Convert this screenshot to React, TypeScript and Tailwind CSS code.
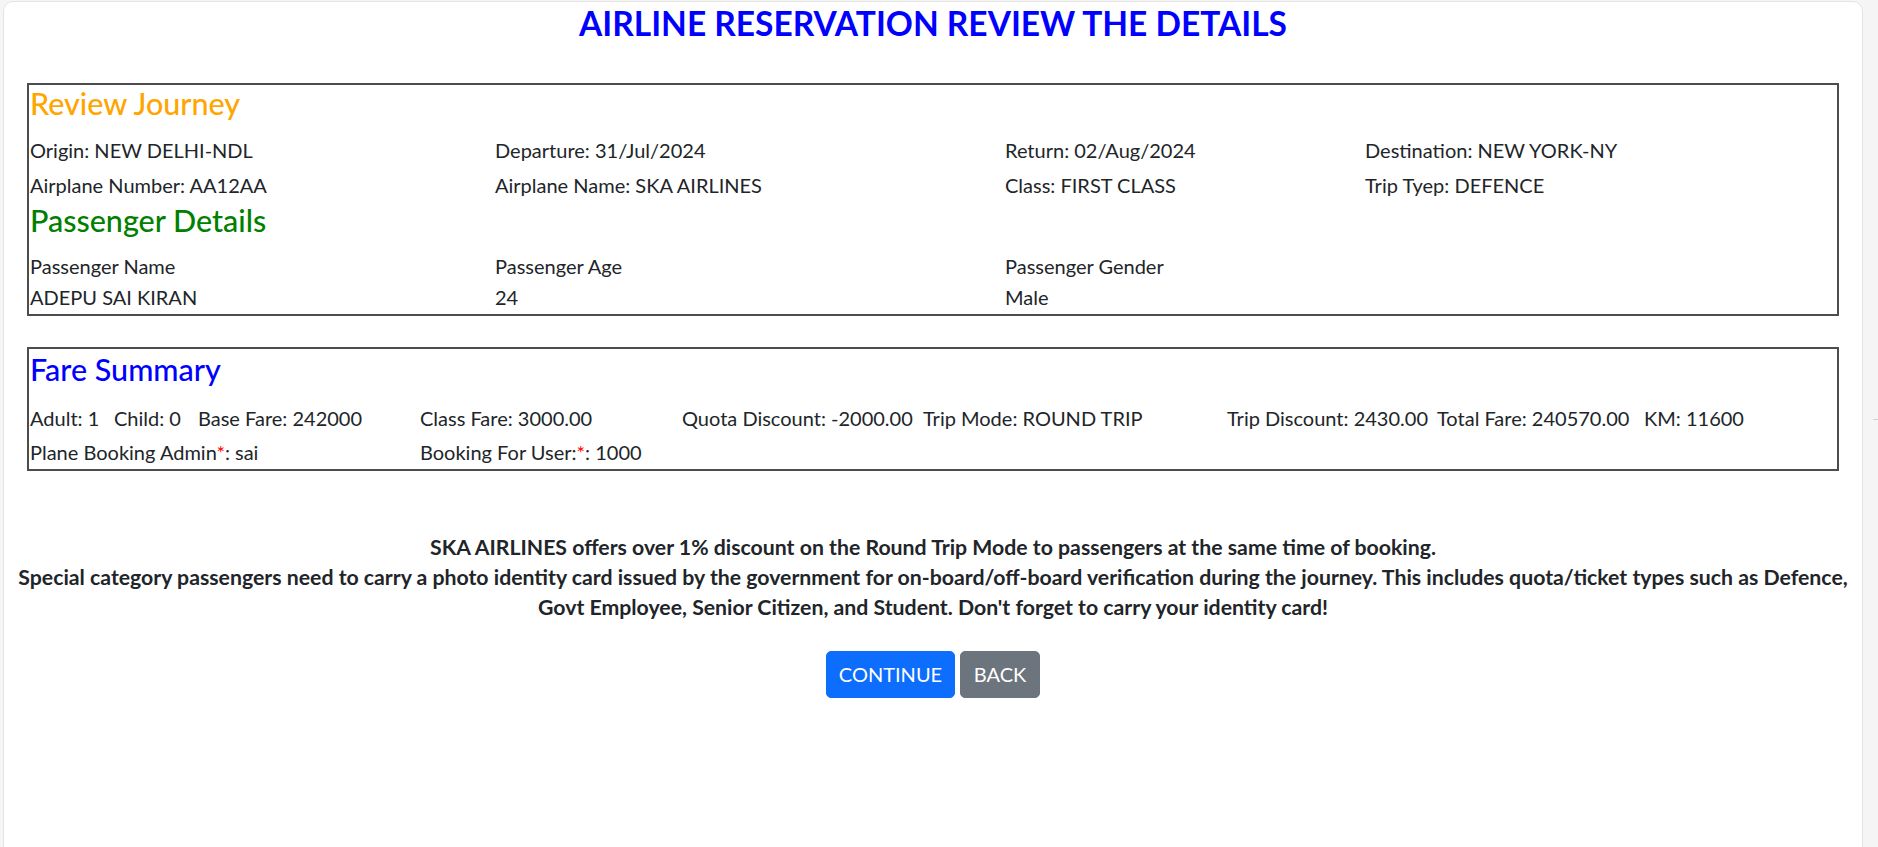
import React from "react";

const journey = [
  ["Origin: NEW DELHI-NDL", "Departure: 31/Jul/2024", "Return: 02/Aug/2024", "Destination: NEW YORK-NY"],
  ["Airplane Number: AA12AA", "Airplane Name: SKA AIRLINES", "Class: FIRST CLASS", "Trip Tyep: DEFENCE"],
];

const fares = [
  "Adult: 1",
  "Child: 0",
  "Base Fare: 242000",
  "Class Fare: 3000.00",
  "Quota Discount: -2000.00",
  "Trip Mode: ROUND TRIP",
  "Trip Discount: 2430.00",
  "Total Fare: 240570.00",
  "KM: 11600",
];

export default function App() {
  return (
    <div
      className="flex h-[847px] overflow-hidden bg-[#f5f5f5] text-[20px] text-[#212529]"
      style={{ fontFamily: "Lato, 'Open Sans', sans-serif" }}
    >
      <div className="w-[3px] shrink-0" />

      {/* main card */}
      <div className="mt-[1px] h-[870px] w-[1860px] shrink-0 rounded-t-[10px] border border-[#e4e4e4] bg-white px-[23px]">
        <h3 className="h-[42px] text-center text-[33.5px] font-bold leading-[42px] text-[#0000ff]">
          AIRLINE RESERVATION REVIEW THE DETAILS
        </h3>

        {/* Review journey + passengers */}
        <div className="mt-[39px] border-2 border-[#4d4d4d] pb-[1px] pl-[1px]">
          <h5 className="mb-[11.5px] h-[36px] text-[30.5px] font-medium leading-[36px] text-[#ffa500]">Review Journey</h5>
          {journey.map((row, i) => (
            <div key={i} className="grid h-[35px] grid-cols-[465px_510px_360px_1fr] leading-[35px]">
              {row.map((cell) => (
                <div key={cell}>{cell}</div>
              ))}
            </div>
          ))}
          <h5 className="-mt-[1px] mb-[13px] h-[36px] text-[30.5px] font-medium leading-[36px] text-[#008000]">
            Passenger Details
          </h5>
          <div className="grid h-[31px] grid-cols-[465px_510px_360px_1fr] leading-[31px]">
            <div>Passenger Name</div>
            <div>Passenger Age</div>
            <div>Passenger Gender</div>
          </div>
          <div className="grid h-[31px] grid-cols-[465px_510px_360px_1fr] leading-[31px]">
            <div>ADEPU SAI KIRAN</div>
            <div>24</div>
            <div>Male</div>
          </div>
        </div>

        {/* Fare summary */}
        <div className="mt-[31px] border-2 border-[#4d4d4d] pl-[1px] pt-[2px]">
          <h5 className="mb-[14px] h-[36px] text-[30.5px] font-medium leading-[36px] text-[#0000ff]">Fare Summary</h5>
          <div className="grid grid-cols-[84px_84px_222px_262px_241px_304px_210px_207px_1fr] leading-[34px]">
            {fares.map((f) => (
              <div key={f} className="h-[34px] whitespace-nowrap">
                {f}
              </div>
            ))}
            <div className="col-span-3 h-[34px]">
              Plane Booking Admin<span className="text-[#ff0000]">*</span>: sai
            </div>
            <div className="col-span-6 h-[34px]">
              Booking For User:<span className="text-[#ff0000]">*</span>: 1000
            </div>
          </div>
        </div>

        {/* notes */}
        <p className="-mx-[23px] mt-[61.5px] text-center text-[21.25px] font-bold leading-[30px]">
          SKA AIRLINES offers over 1% discount on the Round Trip Mode to passengers at the same time of booking.
          <br />
          Special category passengers need to carry a photo identity card issued by the government for on-board/off-board
          verification during the journey. This includes quota/ticket types such as Defence,
          <br />
          Govt Employee, Senior Citizen, and Student. Don't forget to carry your identity card!
        </p>

        <div className="mt-[28.5px] flex justify-center gap-[5px]">
          <button className="h-[47px] w-[129px] rounded-[5px] border border-[#0d6efd] bg-[#0d6efd] leading-[30px] text-white">
            CONTINUE
          </button>
          <button className="h-[47px] w-[80px] rounded-[5px] border border-[#6c757d] bg-[#6c757d] leading-[30px] text-white">
            BACK
          </button>
        </div>
      </div>

      {/* right gutter */}
      <div className="flex-1 pl-[10px] pt-[419px]">
        <div className="h-px w-[6px] bg-[#cfcfcf]" />
      </div>
    </div>
  );
}
